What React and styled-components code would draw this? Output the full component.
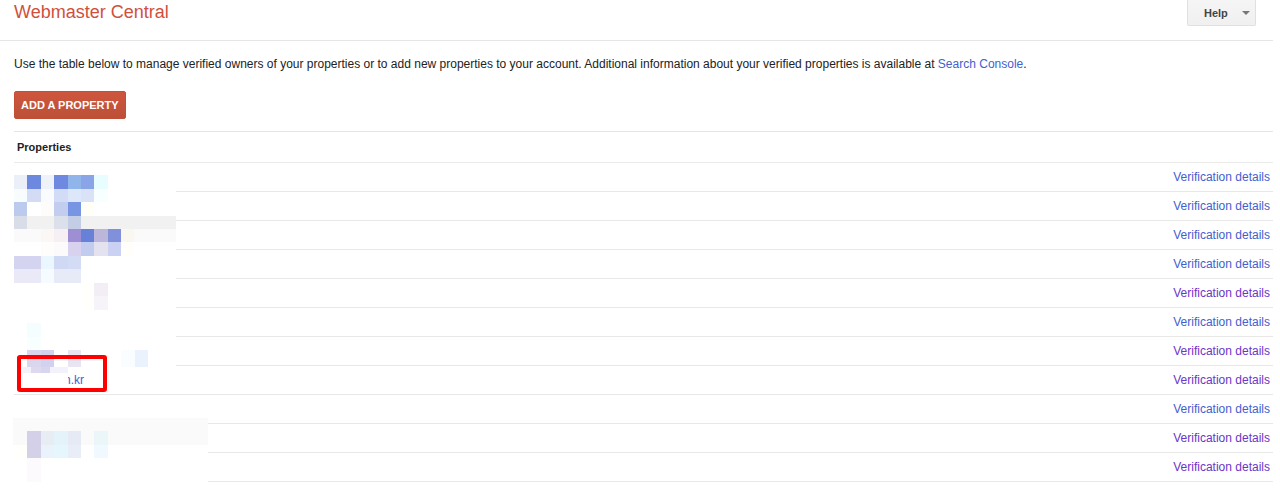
import React from "react";
import styled, { createGlobalStyle } from "styled-components";

const GlobalStyle = createGlobalStyle`
  * { box-sizing: border-box; }
  body {
    margin: 0;
    background: #fff;
    color: #222;
    font-family: "Liberation Sans", Arial, sans-serif;
    font-size: 12px;
    line-height: 16px;
  }
`;

const Page = styled.div`
  padding-right: 7px;
`;

const Header = styled.header`
  display: flex;
  justify-content: space-between;
  align-items: flex-start;
  height: 41px;
  padding-right: 17px;
  border-bottom: 1px solid #e5e5e5;
`;

const Title = styled.h1`
  margin: 0;
  padding: 2px 0 0 14px;
  color: #d0503c;
  font-size: 18px;
  font-weight: 400;
  line-height: 20px;
`;

const HelpButton = styled.button`
  display: flex;
  align-items: center;
  justify-content: space-between;
  width: 69px;
  height: 26px;
  padding: 0 5px 0 16px;
  border: 1px solid #e0e0e0;
  border-top: 0;
  border-radius: 0 0 2px 2px;
  background: linear-gradient(#f5f5f5, #f0f0f0);
  color: #444;
  font: bold 11px/24px "Liberation Sans", Arial, sans-serif;
`;

const Caret = styled.span`
  border: 4px solid transparent;
  border-top-color: #777;
  border-bottom: 0;
`;

const Main = styled.main`
  padding: 15px 0 0 14px;
`;

const Intro = styled.p`
  margin: 0 0 19px;
`;

const Link = styled.a`
  color: ${(p) => (p.$visited ? "#6a35c8" : "#4460cf")};
  text-decoration: none;
`;

const AddButton = styled.button`
  display: block;
  height: 28px;
  margin-bottom: 12px;
  padding: 0 6px;
  border: 1px solid #c34f37;
  border-radius: 2px;
  background: linear-gradient(#cd563d, #bd5038);
  color: #fff;
  font: bold 11px/26px "Liberation Sans", Arial, sans-serif;
  text-transform: uppercase;
`;

const TableArea = styled.div`
  position: relative;
`;

const Table = styled.table`
  width: 100%;
  border-collapse: separate;
  border-spacing: 0;
  border-top: 1px solid #e5e5e5;
`;

const HeadCell = styled.th`
  height: 31px;
  padding: 0 3px;
  border-bottom: 1px solid #ebebeb;
  font-size: 11px;
  text-align: left;
`;

const Cell = styled.td`
  height: 29px;
  padding: 0 3px;
  border-bottom: 1px solid #e8e8e8;
  text-align: ${(p) => (p.$end ? "right" : "left")};
`;

const SiteLink = styled(Link)`
  padding-left: 47px;
`;

const Mosaic = styled.svg`
  position: absolute;
  top: 0;
  left: -1px;
  pointer-events: none;
`;

const rows = [
  { visited: false },
  { visited: false },
  { visited: false },
  { visited: false },
  { visited: true },
  { visited: false },
  { visited: true },
  { visited: true, site: "n.kr" },
  { visited: false },
  { visited: true },
  { visited: true },
];

// Each block: x, y, width, height, fill
const blocks = [
  [14, 170, 162, 202, "#fff"],
  [14, 372, 54, 20, "#fff"],
  [13, 418, 195, 67, "#fff"],
  [14, 175, 13, 14, "#ebeff7"],
  [27, 175, 14, 14, "#6c88df"],
  [41, 175, 13, 14, "#eff2f8"],
  [54, 175, 14, 14, "#6e89df"],
  [68, 175, 13, 14, "#90b5ea"],
  [81, 175, 13, 14, "#8aa5e7"],
  [94, 175, 14, 14, "#e7fdff"],
  [14, 189, 13, 13, "#f9fcfe"],
  [27, 189, 14, 13, "#d3dbf5"],
  [41, 189, 13, 13, "#f9fbfe"],
  [54, 189, 14, 13, "#d3dcf6"],
  [68, 189, 13, 13, "#dce8f9"],
  [81, 189, 13, 13, "#d9e2f7"],
  [94, 189, 14, 13, "#f8ffff"],
  [14, 202, 13, 14, "#bccaed"],
  [41, 202, 13, 14, "#fdfcfa"],
  [54, 202, 14, 14, "#c3cdf0"],
  [68, 202, 13, 14, "#7795e2"],
  [81, 202, 13, 14, "#fffef7"],
  [14, 216, 162, 13, "#f1f1f1"],
  [14, 216, 13, 13, "#d9dde8"],
  [54, 216, 14, 13, "#dbe0eb"],
  [68, 216, 13, 13, "#c4cde6"],
  [14, 229, 162, 13, "#fafafa"],
  [41, 229, 13, 13, "#faf7f4"],
  [54, 229, 14, 13, "#f6eff3"],
  [68, 229, 13, 13, "#9e8fd5"],
  [81, 229, 13, 13, "#6881d8"],
  [94, 229, 14, 13, "#bcb6da"],
  [108, 229, 13, 13, "#8190db"],
  [121, 229, 13, 13, "#faf7f0"],
  [41, 242, 13, 14, "#fffdfb"],
  [54, 242, 14, 14, "#fdfafc"],
  [68, 242, 13, 14, "#d9d2ef"],
  [81, 242, 13, 14, "#c1ccef"],
  [94, 242, 14, 14, "#e4e2ef"],
  [108, 242, 13, 14, "#cbd1f2"],
  [121, 242, 13, 14, "#fffefa"],
  [14, 256, 27, 13, "#d5d4f0"],
  [41, 256, 13, 13, "#ebf7ff"],
  [54, 256, 14, 13, "#d0d9f3"],
  [68, 256, 13, 13, "#d3dcf4"],
  [14, 269, 27, 14, "#e9e9f7"],
  [41, 269, 13, 14, "#f5fbff"],
  [54, 269, 27, 14, "#e7ebf8"],
  [81, 283, 13, 27, "#fffffb"],
  [94, 283, 14, 13, "#f3edf6"],
  [94, 296, 14, 14, "#f7f4f9"],
  [27, 323, 14, 14, "#f5feff"],
  [27, 337, 14, 13, "#f8ffff"],
  [27, 350, 14, 17, "#dad6ed"],
  [41, 350, 13, 17, "#d3d2ee"],
  [68, 350, 13, 17, "#e8e4f2"],
  [121, 350, 14, 17, "#fafdff"],
  [135, 350, 13, 17, "#eaf3fd"],
  [23, 367, 8, 6, "#f3f1fa"],
  [31, 367, 10, 6, "#ded9ee"],
  [41, 367, 9, 6, "#d8d5ee"],
  [50, 367, 18, 6, "#f3f2fa"],
  [13, 418, 195, 27, "#fafafa"],
  [14, 445, 13, 13, "#fffffb"],
  [27, 431, 14, 27, "#d4d0e7"],
  [41, 431, 13, 14, "#e8edf3"],
  [54, 431, 14, 14, "#e3f3f9"],
  [68, 431, 13, 14, "#e6eaf4"],
  [94, 431, 14, 14, "#ebf6f9"],
  [41, 445, 13, 13, "#eaf2fb"],
  [54, 445, 14, 13, "#e5f6fd"],
  [68, 445, 13, 13, "#e9edf7"],
  [94, 445, 14, 13, "#f0f9ff"],
  [27, 458, 14, 25, "#fcfafc"],
];

export default function App() {
  return (
    <Page>
      <GlobalStyle />
      <Header>
        <Title>Webmaster Central</Title>
        <HelpButton type="button">
          Help
          <Caret />
        </HelpButton>
      </Header>
      <Main>
        <Intro>
          Use the table below to manage verified owners of your properties or to
          add new properties to your account. Additional information about your
          verified properties is available at <Link href="#console">Search Console</Link>.
        </Intro>
        <AddButton type="button">Add a property</AddButton>
        <TableArea>
          <Table>
            <thead>
              <tr>
                <HeadCell colSpan={2} scope="col">Properties</HeadCell>
              </tr>
            </thead>
            <tbody>
              {rows.map((row, i) => (
                <tr key={i}>
                  <Cell>{row.site && <SiteLink href="#site">{row.site}</SiteLink>}</Cell>
                  <Cell $end>
                    <Link href="#details" $visited={row.visited}>Verification details</Link>
                  </Cell>
                </tr>
              ))}
            </tbody>
          </Table>
          <Mosaic width="195" height="354" viewBox="13 131 195 354" shapeRendering="crispEdges" aria-hidden="true">
            {blocks.map(([x, y, w, h, fill], i) => (
              <rect key={i} x={x} y={y} width={w} height={h} fill={fill} />
            ))}
            <rect x="19" y="357" width="86" height="33" rx="1" fill="none" stroke="#fe0000" strokeWidth="4" shapeRendering="auto" />
          </Mosaic>
        </TableArea>
      </Main>
    </Page>
  );
}
